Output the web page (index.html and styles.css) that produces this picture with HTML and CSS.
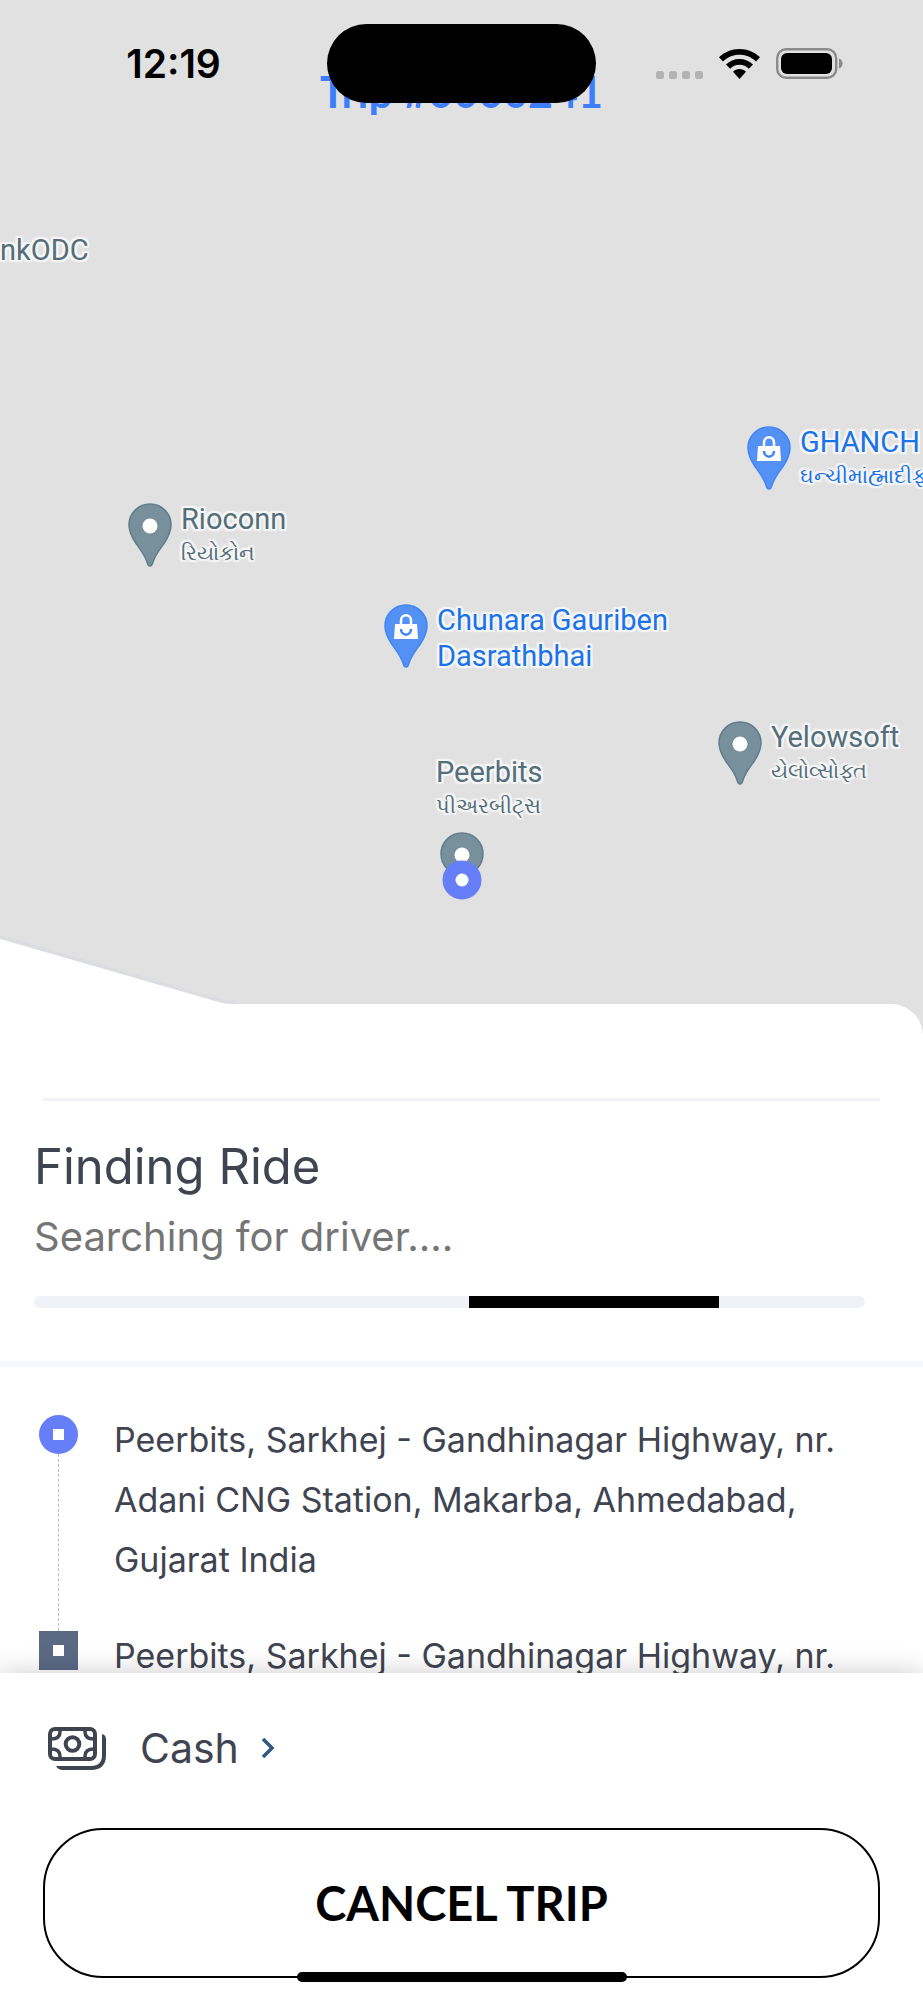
FILE: index.html
```html
<!DOCTYPE html>
<html lang="en">
<head>
    <meta charset="utf-8">
    <meta name="viewport" content="width=device-width, initial-scale=1">
    <title>Finding Ride</title>
    <link rel="stylesheet" href="styles.css">
</head>
<body>
    <!-- shared icons -->
    <svg class="sprite" aria-hidden="true">
        <symbol id="pin" viewBox="0 0 44 64">
            <path d="M22 1C10.400 1 1 10.400 1 22C1 29 4 34.500 8 40.500C13 47.500 17.500 53 19.500 60.500C20 62.300 20.700 63 22 63C23.300 63 24 62.300 24.500 60.500C26.500 53 31 47.500 36 40.500C40 34.500 43 29 43 22C43 10.400 33.600 1 22 1Z" stroke-width="1.500"/>
        </symbol>
        <symbol id="bag" viewBox="0 0 44 64">
            <path d="M17 21V16.500C17 9.500 27 9.500 27 16.500V21" fill="none" stroke="#fff" stroke-width="2.500"/>
            <path d="M11 20H33L34 35H10Z" fill="#fff" stroke="none"/>
            <path d="M17 25C17 32.500 27 32.500 27 25" fill="none" stroke="#4285f4" stroke-width="2.500"/>
        </symbol>
    </svg>

    <div class="screen">
        <section class="map">
            <header class="status">
                <span class="time">12:19</span>
                <div class="island"></div>
                <div class="signals">
                    <svg width="47" height="8" viewBox="0 0 47 8" fill="#b3b3b3">
                        <rect x="0" width="8" height="8" rx="2.500"/>
                        <rect x="13" width="8" height="8" rx="2.500"/>
                        <rect x="26" width="8" height="8" rx="2.500"/>
                        <rect x="39" width="8" height="8" rx="2.500"/>
                    </svg>
                    <svg width="41" height="30" viewBox="0 0 41 30">
                        <path d="M20.500 0C28.500 0 35.800 3.100 41 8.300L37 12.500C32.800 8.300 27 5.800 20.500 5.800S8.200 8.300 4 12.500L0 8.300C5.200 3.100 12.500 0 20.500 0Z"/>
                        <path d="M20.500 10C25.800 10 30.500 12 34 15.500L29.800 19.700C27.400 17.300 24.200 15.800 20.500 15.800S13.600 17.300 11.200 19.700L7 15.500C10.500 12 15.200 10 20.500 10Z"/>
                        <path d="M20.500 20C23 20 25.200 21 27 22.700L20.500 30L14 22.700C15.800 21 18 20 20.500 20Z"/>
                    </svg>
                    <svg width="67" height="31" viewBox="0 0 67 31">
                        <rect x="1.200" y="1.200" width="59" height="28.600" rx="9" fill="none" stroke="#8b8b8b" stroke-width="2.400"/>
                        <rect x="5" y="5" width="51" height="21" rx="6"/>
                        <path d="M63 10.500C67.700 12 67.700 19 63 20.500Z" fill="#8b8b8b"/>
                    </svg>
                </div>
                <h1 class="trip">Trip #0000241</h1>
            </header>

            <div class="place odc"><p>nkODC</p></div>

            <div class="place shop ghanchi">
                <svg class="pin"><use href="#pin"/><use href="#bag"/></svg>
                <p>GHANCH<small>ઘન્ચીમાંહ્માદીફ</small></p>
            </div>
            <div class="place rioconn">
                <svg class="pin"><use href="#pin"/><circle cx="22" cy="23" r="7.500" fill="#fff"/></svg>
                <p>Rioconn<small>રિયોકોન</small></p>
            </div>
            <div class="place shop chunara">
                <svg class="pin"><use href="#pin"/><use href="#bag"/></svg>
                <p>Chunara Gauriben<br>Dasrathbhai</p>
            </div>
            <div class="place yelowsoft">
                <svg class="pin"><use href="#pin"/><circle cx="22" cy="23" r="7.500" fill="#fff"/></svg>
                <p>Yelowsoft<small>યેલોવ્સોફ્ત</small></p>
            </div>
            <div class="place peerbits">
                <p>Peerbits<small>પીઅરબીટ્સ</small></p>
                <svg width="44" height="68" viewBox="0 0 44 68">
                    <circle cx="22" cy="22" r="21" stroke-width="1.500"/>
                    <circle cx="22" cy="23" r="7.500" fill="#fff" stroke="none"/>
                    <circle cx="22" cy="48" r="19.500" fill="#667ef8" stroke="none"/>
                    <circle cx="22" cy="48" r="6.500" fill="#f8ffff" stroke="none"/>
                </svg>
            </div>
        </section>

        <main class="sheet">
            <svg class="slant" width="236" height="68" viewBox="0 0 236 68">
                <path d="M0 1L220 65Q227 67 236 67" fill="none" stroke="#dcdde1" stroke-width="4"/>
                <path d="M0 3L222 67Q226 68 232 68H0Z" fill="#fff"/>
            </svg>

            <section class="finding">
                <h2>Finding Ride</h2>
                <p>Searching for driver....</p>
                <div class="progress" role="progressbar" aria-label="Searching"><div class="bar"></div></div>
            </section>

            <ul class="stops">
                <li class="stop">
                    <div class="track">
                        <span class="dot"></span>
                        <span class="line"></span>
                    </div>
                    <p>Peerbits, Sarkhej - Gandhinagar Highway, nr. Adani CNG Station, Makarba, Ahmedabad, Gujarat India</p>
                </li>
                <li class="stop">
                    <div class="track">
                        <span class="dot square"></span>
                    </div>
                    <p>Peerbits, Sarkhej - Gandhinagar Highway, nr.</p>
                </li>
            </ul>
        </main>

        <footer class="actions">
            <a class="payment" href="#payment">
                <svg width="58" height="43" viewBox="0 0 58 43" fill="none" stroke="#3f4450" stroke-width="4">
                    <rect x="2" y="2" width="45" height="30" rx="5"/>
                    <circle cx="24.500" cy="17" r="6.800"/>
                    <path d="M12 3V5Q12 12 3 12M37 3V5Q37 12 46 12M12 31V29Q12 22 3 22M37 31V29Q37 22 46 22" stroke-width="3.500"/>
                    <path d="M54 7Q58 8 58 12V28Q58 43 43 43H15Q10 43 8 39H43Q54 39 54 28Z" fill="#3f4450" stroke="none"/>
                </svg>
                <span>Cash</span>
                <svg width="14" height="22" viewBox="0 0 14 22" fill="none" stroke="#31567f" stroke-width="3.500"><path d="M2 2L11 11L2 20"/></svg>
            </a>
            <button class="cancel" type="button">CANCEL TRIP</button>
            <div class="home"></div>
        </footer>
    </div>
</body>
</html>
```
FILE: styles.css
```css
* {
    box-sizing: border-box;
}
body {
    margin: 0;
    font-family: Inter, sans-serif;
    color: #3f4450;
    background: #fff;
}
h1, h2, p, ul {
    margin: 0;
    padding: 0;
    font-weight: normal;
}
.sprite {
    display: none;
}
.screen {
    display: flex;
    flex-direction: column;
    height: 100vh;
    overflow: hidden;
}

/* map */
.map {
    position: relative;
    flex: 1;
    background: #e1e1e1;
    overflow: hidden;
}
.status {
    position: relative;
    display: grid;
    grid-template-columns: 1fr 269px 1fr;
    align-items: center;
    padding-top: 24px;
}
.time {
    padding-left: 20px;
    text-align: center;
    font: 600 39px Inter, sans-serif;
    color: #000;
}
.island {
    height: 79px;
    border-radius: 40px;
    background: #000;
    z-index: 1;
}
.signals {
    display: flex;
    align-items: flex-end;
    justify-content: flex-end;
    gap: 16px;
    padding-right: 80px;
}
.trip {
    position: absolute;
    top: 66px;
    left: 0;
    right: 0;
    text-align: center;
    font: bold 43px/52px Lato, sans-serif;
    color: #3d7eff;
}
.place {
    position: absolute;
    display: flex;
    gap: 9px;
    font: 29px/36px Roboto, sans-serif;
    color: #546e7a;
    fill: #78909c;
    stroke: #607d8b;
    white-space: nowrap;
    text-shadow: 2px 0 1px #f6f6f6, -2px 0 1px #f6f6f6, 0 2px 1px #f6f6f6, 0 -2px 1px #f6f6f6,
        2px 2px 1px #f6f6f6, -2px -2px 1px #f6f6f6, 2px -2px 1px #f6f6f6, -2px 2px 1px #f6f6f6;
}
.place small {
    display: block;
    font-size: 21px;
    line-height: 32px;
}
.shop {
    color: #1a73e8;
    fill: #5491f5;
    stroke: #4285f4;
}
.pin {
    width: 44px;
    height: 64px;
    margin-top: 2px;
}
.pin circle {
    stroke: none;
}
.odc {
    top: 232px;
    left: 0;
}
.ghanchi {
    top: 424px;
    left: 747px;
}
.rioconn {
    top: 501px;
    left: 128px;
}
.chunara {
    top: 602px;
    left: 384px;
}
.yelowsoft {
    top: 719px;
    left: 718px;
}
.peerbits {
    top: 754px;
    left: 436px;
    flex-direction: column;
    gap: 10px;
}
.peerbits svg {
    margin-left: 4px;
}

/* sheet */
.sheet {
    position: relative;
    margin-top: -32px;
    border-top-right-radius: 32px;
    background: #fff;
}
.slant {
    position: absolute;
    left: 0;
    bottom: 100%;
}
.finding {
    margin-top: 94px;
    padding: 0 43px 53px 34px;
    border-bottom: 6px solid #f7f8fd;
}
.finding::before {
    content: "";
    display: block;
    height: 3px;
    margin-left: 9px;
    background: #f1f2f8;
}
.finding h2 {
    margin-top: 34px;
    font-size: 49px;
    line-height: 64px;
}
.finding p {
    margin-top: 6px;
    font-size: 40px;
    line-height: 64px;
    color: #757575;
}
.progress {
    height: 12px;
    margin: 27px 15px 0 0;
    border-radius: 6px;
    background: #f1f2f8;
}
.bar {
    width: 30%;
    height: 100%;
    margin-left: 52.4%;
    background: #000;
}
.stops {
    height: 306px;
    padding: 43px 39px 0;
    overflow: hidden;
    list-style: none;
}
.stop {
    display: flex;
    gap: 36px;
}
.stop p {
    padding-bottom: 36px;
    font-size: 34px;
    line-height: 60px;
}
.track {
    display: flex;
    flex-direction: column;
    align-items: center;
    padding-top: 5px;
    margin-bottom: -5px;
}
.dot {
    display: grid;
    place-items: center;
    width: 39px;
    height: 39px;
    border-radius: 50%;
    background: #667ef8;
}
.dot::before {
    content: "";
    width: 11px;
    height: 11px;
    background: #fff;
}
.square {
    border-radius: 0;
    background: #5c6985;
}
.line {
    flex: 1;
    border-left: 1px dashed #b9bcc8;
}

/* bottom panel */
.actions {
    position: relative;
    padding: 37px 43px 22px;
    background: #fff;
    box-shadow: 0 0 26px rgba(0, 0, 0, 0.2);
}
.payment {
    display: flex;
    align-items: center;
    padding-left: 5px;
    font-size: 41px;
    line-height: 76px;
    color: inherit;
    text-decoration: none;
}
.payment span {
    margin: 0 22px 0 34px;
}
.cancel {
    display: block;
    width: 100%;
    height: 150px;
    margin-top: 42px;
    border: 2px solid #000;
    border-radius: 60px;
    background: #fff;
    color: #000;
    font: bold 47px Lato, sans-serif;
}
.home {
    position: absolute;
    bottom: 18px;
    left: 50%;
    width: 330px;
    height: 10px;
    margin-left: -165px;
    border-radius: 5px;
    background: #000;
}
```
